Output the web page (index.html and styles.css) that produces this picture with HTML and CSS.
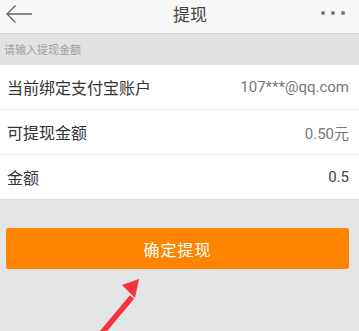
FILE: index.html
```html
<!DOCTYPE html>
<html lang="zh-CN">
<head>
    <meta charset="UTF-8">
    <title>提现</title>
    <link rel="stylesheet" href="styles.css">
</head>
<body>

<div class="page">
    <div class="topbar">
        <svg class="back" width="30" height="20" viewBox="0 0 30 20">
            <path d="M27 10H2.5M10.5 1.5L2 10L10.5 18.5" fill="none" stroke="#666" stroke-width="1.3"/>
        </svg>
        <span class="title">提现</span>
        <span class="more"><i></i><i></i><i></i></span>
    </div>

    <div class="section-label">请输入提现金额</div>

    <div class="list">
        <div class="row">
            <span>当前绑定支付宝账户</span>
            <span class="value">107***@qq.com</span>
        </div>
        <div class="row">
            <span>可提现金额</span>
            <span class="value">0.50元</span>
        </div>
        <div class="row">
            <span>金额</span>
            <span class="value dark">0.5</span>
        </div>
    </div>

    <div class="actions">
        <button class="btn">确定提现</button>
    </div>

    <!-- 标注箭头 -->
    <svg class="arrow" width="80" height="70" viewBox="0 0 80 70">
        <path d="M16 69L52 26" stroke="#f5333a" stroke-width="5.5" fill="none"/>
        <polygon points="59,8 42,14 55,27" fill="#f5333a"/>
    </svg>
</div>

</body>
</html>
```

FILE: styles.css
```css
body {
    margin: 0;
    font-family: "Noto Sans CJK SC", "Liberation Sans", sans-serif;
    background: #e4e5e7;
}
.page {
    position: relative;
    width: 359px;
    height: 331px;
    overflow: hidden;
}
.topbar {
    box-sizing: border-box;
    height: 34px;
    background: #f8f8f8;
    border-bottom: 1px solid #d6d6d6;
    display: flex;
    align-items: center;
    justify-content: space-between;
    padding: 0 14px 6px 5px;
}
.title {
    font-size: 17px;
    color: #444;
    margin-left: 24px;
}
.more {
    display: flex;
    gap: 6px;
    margin-top: -2px;
}
.more i {
    width: 4px;
    height: 4px;
    border-radius: 50%;
    background: #777;
}
.section-label {
    height: 31px;
    line-height: 31px;
    padding-left: 4px;
    font-size: 11px;
    color: #a0a0a0;
    background: #e2e2e2;
}
.list {
    background: #fff;
    border-bottom: 1px solid #dcdcdc;
}
.row {
    height: 44px;
    display: flex;
    align-items: center;
    justify-content: space-between;
    padding: 0 10px 0 7px;
    font-size: 16px;
    color: #333;
    border-bottom: 1px solid #ececec;
}
.row:last-child {
    border-bottom: none;
}
.value {
    font-family: "Roboto", "Noto Sans CJK SC", sans-serif;
    font-size: 15px;
    color: #777;
}
.value.dark {
    color: #444;
}
.actions {
    padding: 28px 10px 0 6px;
}
.btn {
    display: block;
    width: 100%;
    height: 41px;
    border: none;
    border-radius: 2px;
    background: #ff8500;
    color: #fff;
    font-family: "Noto Sans CJK SC", sans-serif;
    font-size: 16px;
    letter-spacing: 1px;
}
.arrow {
    position: absolute;
    left: 80px;
    top: 271px;
}
```
